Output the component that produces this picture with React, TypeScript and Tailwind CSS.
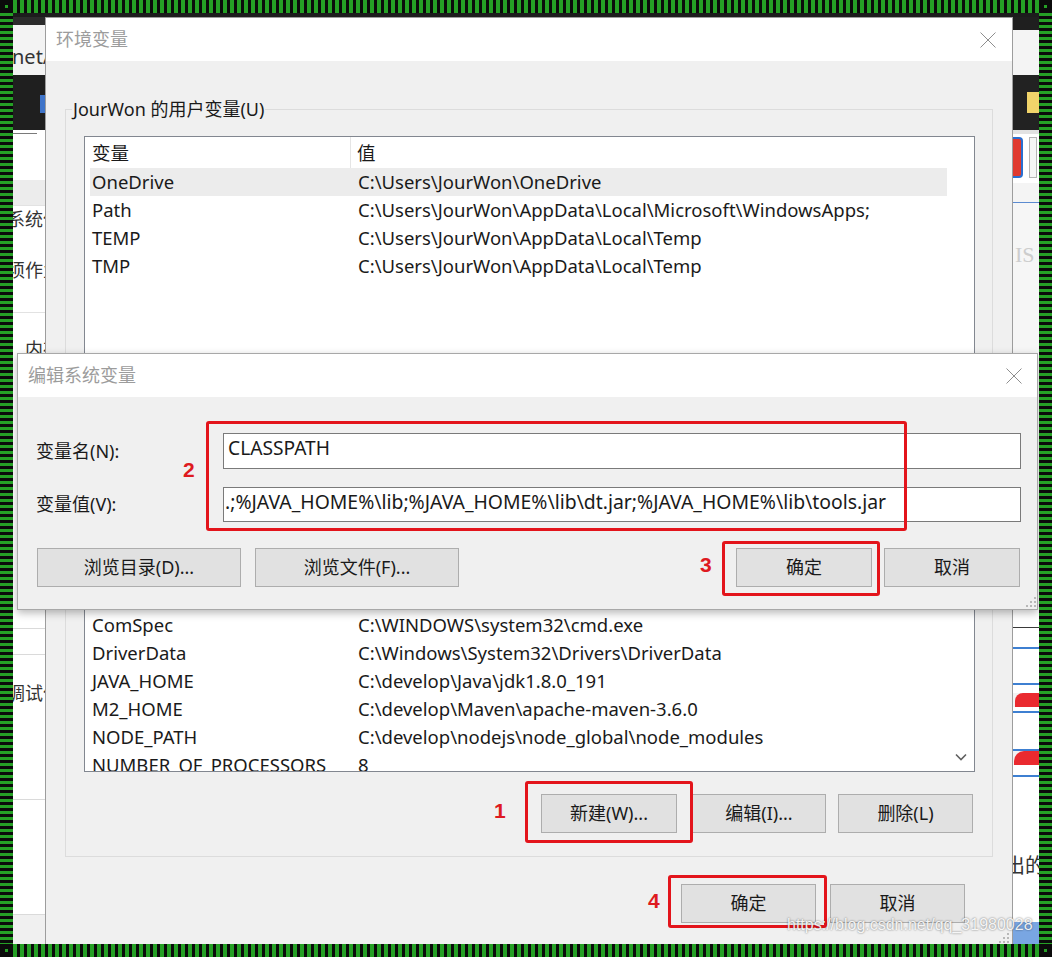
import React from 'react';

const userVars: [string, string][] = [
  ['OneDrive', 'C:\\Users\\JourWon\\OneDrive'],
  ['Path', 'C:\\Users\\JourWon\\AppData\\Local\\Microsoft\\WindowsApps;'],
  ['TEMP', 'C:\\Users\\JourWon\\AppData\\Local\\Temp'],
  ['TMP', 'C:\\Users\\JourWon\\AppData\\Local\\Temp'],
];

const systemVars: [string, string][] = [
  ['asl.log', 'Destination=file'],
  ['ComSpec', 'C:\\WINDOWS\\system32\\cmd.exe'],
  ['DriverData', 'C:\\Windows\\System32\\Drivers\\DriverData'],
  ['JAVA_HOME', 'C:\\develop\\Java\\jdk1.8.0_191'],
  ['M2_HOME', 'C:\\develop\\Maven\\apache-maven-3.6.0'],
  ['NODE_PATH', 'C:\\develop\\nodejs\\node_global\\node_modules'],
  ['NUMBER_OF_PROCESSORS', '8'],
  ['OS', 'Windows_NT'],
];

function HBand() {
  return <div className="bg-[repeating-linear-gradient(90deg,#25a025_0px,#25a025_4px,#0b0b0b_4px,#0b0b0b_7px)]" />;
}

function VBand() {
  return <div className="bg-[repeating-linear-gradient(180deg,#25a025_0px,#25a025_3px,#0b0b0b_3px,#0b0b0b_6px)]" />;
}

function Corner() {
  return (
    <div className="bg-[#0b0b0b] flex items-center justify-center">
      <div className="w-[3px] h-[3px] bg-[#25a025]" />
    </div>
  );
}

function CloseIcon() {
  return (
    <svg width="16" height="16" viewBox="0 0 16 16" className="block">
      <path d="M0.5 0.5 L15.5 15.5 M15.5 0.5 L0.5 15.5" stroke="#8e8e8e" strokeWidth="1" fill="none" />
    </svg>
  );
}

function Grip() {
  return (
    <svg width="10" height="10" viewBox="0 0 10 10" className="block">
      <rect x="8" y="0" width="2" height="2" fill="#b8b8b8" />
      <rect x="4" y="4" width="2" height="2" fill="#b8b8b8" />
      <rect x="8" y="4" width="2" height="2" fill="#b8b8b8" />
      <rect x="0" y="8" width="2" height="2" fill="#b8b8b8" />
      <rect x="4" y="8" width="2" height="2" fill="#b8b8b8" />
      <rect x="8" y="8" width="2" height="2" fill="#b8b8b8" />
    </svg>
  );
}

function TitleBar({ title, pl, pr }: { title: string; pl: string; pr: string }) {
  return (
    <div className={`h-[43px] shrink-0 bg-white flex items-center justify-between ${pl} ${pr}`}>
      <span className="text-[18px] text-[#9c9c9c]">{title}</span>
      <CloseIcon />
    </div>
  );
}

function WinButton({ children, w }: { children: React.ReactNode; w: string }) {
  return (
    <div className={`h-[39px] ${w} shrink-0 flex items-center justify-center bg-[#e1e1e1] border border-[#adadad] text-[18px] text-[#1a1a1a] whitespace-nowrap`}>
      {children}
    </div>
  );
}

function VarTable({ rows, selected, scroll, h }: { rows: [string, string][]; selected?: number; scroll?: boolean; h: string }) {
  return (
    <div className={`${h} border border-[#828790] bg-white flex flex-col overflow-hidden text-[18.5px] text-[#1a1a1a]`}>
      <div className="h-[31px] shrink-0 flex items-center">
        <div className="w-[266px] h-full flex items-center pl-[7px] border-r border-[#e5e5e5]">变量</div>
        <div className="pl-[6px]">值</div>
      </div>
      <div className="flex-1 min-h-0 flex">
        <div className="flex-1 ml-[5px] overflow-hidden">
          {rows.map(([k, v], i) => (
            <div
              key={k}
              className={`h-[28px] grid grid-cols-[266px_1fr] items-center whitespace-nowrap ${i === selected ? 'bg-[#ececec]' : ''}`}
            >
              <span className="pl-[2px]">{k}</span>
              <span className="pl-[2px]">{v}</span>
            </div>
          ))}
        </div>
        <div className="w-[27px] shrink-0 flex flex-col justify-end items-center pb-[10px]">
          {scroll && (
            <svg width="12" height="8" viewBox="0 0 12 8" className="block">
              <path d="M1 1.5 L6 6.5 L11 1.5" stroke="#606060" strokeWidth="1.6" fill="none" />
            </svg>
          )}
        </div>
      </div>
    </div>
  );
}

function EnvDialog() {
  return (
    <div className="absolute left-[32px] top-[4px] w-[968px] h-[940px] flex flex-col border-x border-t border-[#9d9d9d] bg-[#f0f0f0]">
      <TitleBar title="环境变量" pl="pl-[10px]" pr="pr-[16px]" />
      <div className="flex-1 flex flex-col px-[19px] pt-[36px]">
        {/* user variables */}
        <fieldset className="border border-[#dcdcdc] pl-[18px] pr-[17px] pb-[23px]">
          <legend className="-ml-[12px] px-[1px] text-[18px] leading-[24px]">JourWon 的用户变量(U)</legend>
          <div className="mt-[15px]">
            <VarTable rows={userVars} selected={0} h="h-[280px]" />
          </div>
          <div className="mt-[22px] flex justify-end gap-[13px] pr-[2px]">
            <WinButton w="w-[136px]">新建(N)...</WinButton>
            <WinButton w="w-[134px]">编辑(E)...</WinButton>
            <WinButton w="w-[135px]">删除(D)</WinButton>
          </div>
        </fieldset>

        {/* system variables */}
        <fieldset className="mt-[11px] border border-[#dcdcdc] pl-[18px] pr-[17px] pb-[23px]">
          <legend className="-ml-[12px] px-[1px] text-[18px] leading-[24px]">系统变量(S)</legend>
          <div className="mt-[15px]">
            <VarTable rows={systemVars} scroll h="h-[221px]" />
          </div>
          <div className="mt-[22px] flex justify-end pr-[2px]">
            <WinButton w="w-[136px]">新建(W)...</WinButton>
            <div className="w-[15px]" />
            <WinButton w="w-[134px]">编辑(I)...</WinButton>
            <div className="w-[12px]" />
            <WinButton w="w-[135px]">删除(L)</WinButton>
          </div>
        </fieldset>

        <div className="mt-[27px] flex justify-end gap-[14px] pr-[28px]">
          <WinButton w="w-[135px]">确定</WinButton>
          <WinButton w="w-[135px]">取消</WinButton>
        </div>
        <div className="mt-[10px] flex justify-end mr-[-16px]">
          <Grip />
        </div>
      </div>
    </div>
  );
}

function EditDialog() {
  return (
    <div className="absolute left-[4px] top-[340px] w-[1021px] h-[257px] flex flex-col border border-[#a8a8a8] bg-[#f0f0f0] shadow-[0_3px_8px_rgba(0,0,0,0.28)]">
      <TitleBar title="编辑系统变量" pl="pl-[10px]" pr="pr-[15px]" />
      <div className="flex-1 flex flex-col pt-[36px]">
        <div className="grid grid-cols-[187px_1fr] grid-rows-[36px_35px] gap-y-[18px] pl-[18px] pr-[16px] text-[18px]">
          <div className="flex items-center">变量名(N):</div>
          <div className="bg-white border border-[#7a7a7a] flex items-center pl-[4px] pb-[5px] text-[19.2px]">CLASSPATH</div>
          <div className="flex items-center">变量值(V):</div>
          <div className="bg-white border border-[#7a7a7a] flex items-center pl-[1px] pb-[5px] whitespace-nowrap overflow-hidden text-[19.4px]">
            .;%JAVA_HOME%\lib;%JAVA_HOME%\lib\dt.jar;%JAVA_HOME%\lib\tools.jar
          </div>
        </div>
        <div className="mt-[26px] flex items-center pl-[19px] pr-[17px]">
          <WinButton w="w-[204px]">浏览目录(D)...</WinButton>
          <div className="w-[14px]" />
          <WinButton w="w-[204px]">浏览文件(F)...</WinButton>
          <div className="flex-1" />
          <WinButton w="w-[136px]">确定</WinButton>
          <div className="w-[12px]" />
          <WinButton w="w-[136px]">取消</WinButton>
        </div>
        <div className="flex-1 flex justify-end items-end pr-[1px] pb-[2px]">
          <Grip />
        </div>
      </div>
    </div>
  );
}

function Mark({ n, box, num }: { n: string; box: string; num: string }) {
  return (
    <>
      <div className={`absolute border-[3px] border-[#e3141b] rounded-[3px] ${box}`} />
      <div className={`absolute text-[21px] leading-none font-bold text-[#de1a20] font-['Liberation_Sans',sans-serif] ${num}`}>{n}</div>
    </>
  );
}

function Annotations() {
  return (
    <>
      <Mark n="2" box="left-[193px] top-[408px] w-[701px] h-[110px]" num="left-[170px] top-[446px]" />
      <Mark n="3" box="left-[709px] top-[528px] w-[158px] h-[55px]" num="left-[687px] top-[541px]" />
      <Mark n="1" box="left-[512px] top-[768px] w-[168px] h-[62px]" num="left-[481px] top-[787px]" />
      <Mark n="4" box="left-[655px] top-[862px] w-[159px] h-[53px]" num="left-[635px] top-[877px]" />
    </>
  );
}

function LeftStrip() {
  return (
    <div className="w-[32px] flex flex-col overflow-hidden text-[18px] text-[#333] whitespace-nowrap">
      <div className="h-[8px] shrink-0 bg-[#2b2b2b]" />
      <div className="h-[50px] shrink-0 bg-[#f3f3f3] pt-[20px] leading-[24px] text-[20px] -ml-[1px]">net/</div>
      <div className="h-[55px] shrink-0 bg-[#1f1f1f] pt-[20px] flex justify-end">
        <div className="w-[5px] h-[18px] bg-[#3f74c9]" />
      </div>
      <div className="h-[50px] shrink-0 bg-white pt-[3px]">
        <div className="w-[24px] h-[1px] bg-[#7a7a7a]" />
      </div>
      <div className="h-[25px] shrink-0 bg-[#ececec]" />
      <div className="h-[107px] shrink-0 bg-white border-t border-[#e2e2e2]">
        <div className="mt-[1px] leading-[24px] -ml-[6px]">系统信</div>
        <div className="mt-[27px] leading-[24px] -ml-[6px]">须作业</div>
      </div>
      <div className="h-[41px] shrink-0 bg-white border-t border-[#e2e2e2]">
        <div className="mt-[24px] leading-[24px] pl-[12px]">内存</div>
      </div>
      <div className="h-[257px] shrink-0 bg-white" />
      <div className="h-[19px] shrink-0 bg-white border-b border-[#dadada]" />
      <div className="h-[26px] shrink-0 bg-white border-b border-[#dadada]" />
      <div className="h-[145px] shrink-0 bg-white border-b border-[#dadada]">
        <div className="mt-[26px] leading-[24px] -ml-[6px]">调试信</div>
      </div>
      <div className="h-[115px] shrink-0 bg-white border-b border-[#dadada]" />
      <div className="flex-1 bg-[#f0f0f0]" />
    </div>
  );
}

function RightStrip() {
  return (
    <div className="w-[26px] flex flex-col overflow-hidden whitespace-nowrap">
      <div className="h-[13px] shrink-0 bg-[#1f1f1f]" />
      <div className="h-[45px] shrink-0 bg-[#f4f4f4]" />
      <div className="h-[55px] shrink-0 bg-[#222] pt-[17px] pl-[14px]">
        <div className="w-[12px] h-[21px] bg-[#f1d46a]" />
      </div>
      <div className="h-[4px] shrink-0 bg-[#e2e2e2]" />
      <div className="h-[49px] shrink-0 bg-white flex items-start pt-[3px]">
        <div className="w-[10px] h-[41px] rounded-r-[4px] border-[2px] border-l-0 border-[#2a6fd0] bg-[#e03a2f]" />
        <div className="ml-[6px] w-[8px] h-[41px] border border-[#b5b5b5] bg-[#f6f6f6]" />
      </div>
      <div className="h-[20px] shrink-0 bg-[#f4f4f4] border-b border-[#5b8bd0]" />
      <div className="h-[150px] shrink-0 bg-[#f6f6f6] pt-[40px] pl-[2px] text-[22px] leading-[24px] text-[#cdcdcd] font-['Liberation_Serif',serif]">IS</div>
      <div className="h-[257px] shrink-0 bg-white" />
      <div className="h-[18px] shrink-0 bg-white border-b border-[#3a3a3a]" />
      <div className="h-[21px] shrink-0 bg-white border-b-2 border-[#3d7fd1]" />
      <div className="h-[36px] shrink-0 bg-white border-b-2 border-[#3d7fd1]" />
      <div className="h-[8px] shrink-0 bg-white" />
      <div className="h-[14px] shrink-0 bg-[#ea2a2f] rounded-tl-[8px] ml-[2px]" />
      <div className="h-[6px] shrink-0 bg-white border-b-2 border-[#3d7fd1]" />
      <div className="h-[38px] shrink-0 bg-white border-b-2 border-[#3d7fd1]" />
      <div className="h-[14px] shrink-0 bg-[#ea2a2f] rounded-tl-[10px] ml-[1px]" />
      <div className="h-[12px] shrink-0 bg-white border-b-2 border-[#3d7fd1]" />
      <div className="h-[78px] shrink-0 bg-white" />
      <div className="h-[22px] shrink-0 bg-white text-[20px] leading-[22px] text-[#333] -ml-[8px]">出的</div>
      <div className="h-[45px] shrink-0 bg-white" />
      <div className="flex-1 bg-[#79a6e2]" />
    </div>
  );
}

function Desktop() {
  return (
    <div className="relative overflow-hidden flex flex-col bg-[#f3f3f3]">
      <div className="h-[4px] shrink-0 bg-[#1c1c1c]" />
      <div className="flex-1 flex justify-between">
        <LeftStrip />
        <RightStrip />
      </div>
      <EnvDialog />
      <EditDialog />
      <Annotations />
      <div className="absolute left-[774px] top-[902px] text-[16px] leading-[20px] text-white/90 [text-shadow:0_0_2px_rgba(0,0,0,0.6)] font-['Liberation_Sans',sans-serif]">
        https://blog.csdn.net/qq_31980028
      </div>
    </div>
  );
}

export default function App() {
  return (
    <div className="w-[1052px] h-[957px] grid grid-cols-[13px_1026px_13px] grid-rows-[13px_931px_13px] bg-[#0b0b0b] overflow-hidden font-['Noto_Sans','Noto_Sans_CJK_SC',sans-serif] text-[#1a1a1a]">
      <Corner />
      <HBand />
      <Corner />
      <VBand />
      <Desktop />
      <VBand />
      <Corner />
      <HBand />
      <Corner />
    </div>
  );
}
